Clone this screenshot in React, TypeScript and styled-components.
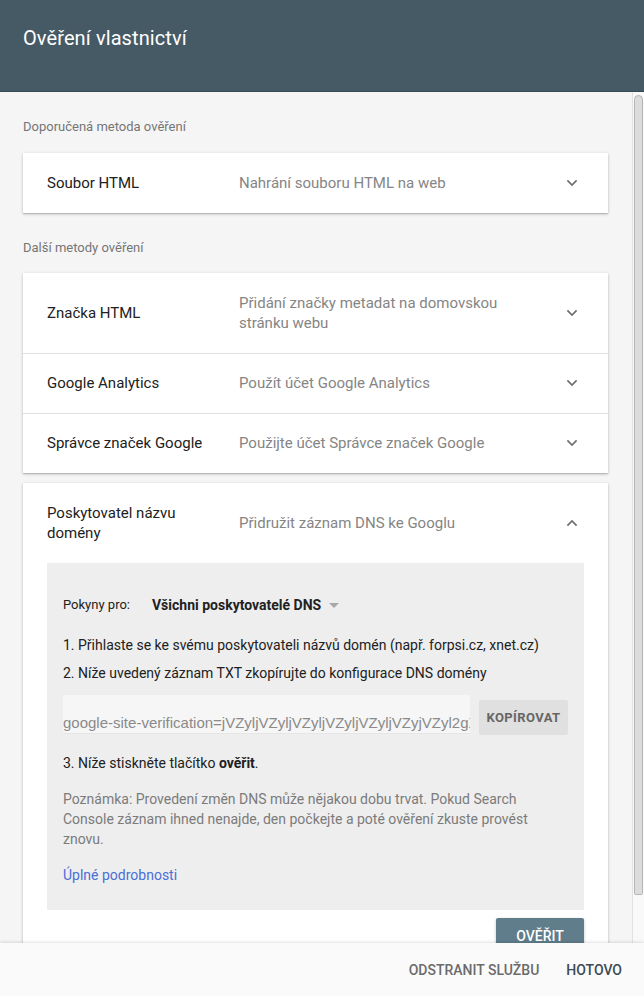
import React from "react";
import styled, { createGlobalStyle } from "styled-components";

const GlobalStyle = createGlobalStyle`
  html, body {
    margin: 0;
    padding: 0;
    height: 100%;
    overflow: hidden;
  }
  body {
    font-family: Roboto, "Liberation Sans", Arial, sans-serif;
    background: #f5f5f5;
  }
`;

const Dialog = styled.div`
  display: flex;
  flex-direction: column;
  width: 644px;
  height: 996px;
  background: #f5f5f5;
`;

const Header = styled.header`
  flex: 0 0 92px;
  background: #465a65;
  border-bottom: 1px solid #3a4a54;
  box-sizing: border-box;
  padding: 26px 23px 0;
`;

const HeaderTitle = styled.h1`
  margin: 0;
  font-size: 20px;
  font-weight: 400;
  letter-spacing: 0.1px;
  line-height: 24px;
  color: #ffffff;
`;

const BodyArea = styled.div`
  flex: 1;
  display: flex;
  min-height: 0;
`;

const Content = styled.div`
  flex: 1;
  overflow: hidden;
  padding: 26px 24px 20px 23px;
`;

const ScrollTrack = styled.div`
  flex: 0 0 12px;
  box-sizing: border-box;
  background: #f9f9f9;
  border-left: 1px solid #e2e2e2;
  padding: 3px 1px 0 1px;
`;

const ScrollThumb = styled.div`
  height: 800px;
  box-sizing: border-box;
  background: #dcdcdc;
  border: 1px solid #b5b5b5;
  border-radius: 5px 5px 2px 2px;
`;

const SectionLabel = styled.div<{ $first?: boolean }>`
  font-size: 13px;
  line-height: 18px;
  color: #757575;
  margin: ${(p) => (p.$first ? "0 0 17px" : "26px 0 16px")};
`;

const Card = styled.div<{ $gap?: boolean }>`
  background: #ffffff;
  box-shadow: 0 1px 3px rgba(0, 0, 0, 0.22), 0 1px 1px rgba(0, 0, 0, 0.12);
  margin-top: ${(p) => (p.$gap ? "10px" : "0")};
`;

const Row = styled.div<{ $divider?: boolean }>`
  display: grid;
  grid-template-columns: 168px 1fr 24px;
  column-gap: 24px;
  align-items: center;
  padding: ${(p) => (p.$divider ? "19px" : "20px")} 24px 20px;
  border-top: ${(p) => (p.$divider ? "1px solid #e0e0e0" : "none")};
`;

const RowTitle = styled.div`
  font-size: 15px;
  line-height: 20px;
  color: #212121;
`;

const RowDesc = styled.div`
  font-size: 15px;
  line-height: 20px;
  color: #858585;
`;

const ChevronWrap = styled.div`
  display: flex;
  align-items: center;
  justify-content: center;
  height: 20px;
  color: #6e6e6e;
`;

const Details = styled.div`
  margin: 0 24px;
  background: #eeeeee;
  padding: 32px 16px 25px;
`;

const ProviderLine = styled.div`
  display: flex;
  align-items: center;
  font-size: 13px;
  line-height: 20px;
  color: #212121;
  margin-bottom: 20px;
`;

const ProviderSelect = styled.span`
  display: inline-flex;
  align-items: center;
  margin-left: 22px;
  font-size: 14px;
  font-weight: 700;
`;

const SelectArrow = styled.span`
  width: 0;
  height: 0;
  margin-left: 8px;
  border-left: 5px solid transparent;
  border-right: 5px solid transparent;
  border-top: 5px solid #a8a8a8;
`;

const Step = styled.div`
  font-size: 14px;
  line-height: 20px;
  color: #212121;
  margin-bottom: 8px;

  b {
    font-weight: 700;
  }
`;

const RecordRow = styled.div`
  display: flex;
  align-items: flex-start;
  gap: 9px;
  margin: 12px 0 18px;
`;

const RecordField = styled.div`
  flex: 0 0 407px;
  height: 39px;
  box-sizing: border-box;
  background: #f6f6f6;
  border-bottom: 1px solid #e6e6e6;
  padding-top: 19px;
  overflow: hidden;
  white-space: nowrap;
  font-family: "Liberation Sans", Arial, sans-serif;
  font-size: 15px;
  line-height: 18px;
  color: #8a8a8a;
`;

const CopyButton = styled.button`
  margin-top: 5px;
  height: 35px;
  width: 89px;
  border: none;
  border-radius: 2px;
  background: #e0e0e0;
  color: #666666;
  font-family: Roboto, sans-serif;
  font-size: 13px;
  font-weight: 700;
  letter-spacing: 0.4px;
  text-transform: uppercase;
  padding: 0;
  cursor: pointer;
`;

const Note = styled.p`
  margin: 16px 0 16px;
  max-width: 480px;
  font-size: 14px;
  line-height: 20px;
  color: #7b7b7b;
`;

const DetailsLink = styled.a`
  font-size: 14px;
  line-height: 20px;
  color: #4a6fd6;
  text-decoration: none;
`;

const ActionRow = styled.div`
  display: flex;
  justify-content: flex-end;
  padding: 8px 24px 24px;
`;

const VerifyButton = styled.button`
  height: 36px;
  width: 88px;
  border: none;
  border-radius: 2px;
  background: #607d8b;
  color: #ffffff;
  font-family: Roboto, sans-serif;
  font-size: 14px;
  font-weight: 500;
  text-transform: uppercase;
  box-shadow: 0 1px 3px rgba(0, 0, 0, 0.25);
  cursor: pointer;
`;

const Footer = styled.footer`
  flex: 0 0 53px;
  display: flex;
  align-items: center;
  justify-content: flex-end;
  gap: 27px;
  padding-right: 22px;
  background: #fafafa;
  box-shadow: 0 -1px 3px rgba(0, 0, 0, 0.12);
  position: relative;
  z-index: 1;
`;

const FooterButton = styled.button<{ $primary?: boolean }>`
  border: none;
  background: none;
  padding: 0;
  font-family: Roboto, sans-serif;
  font-size: 14px;
  font-weight: 500;
  text-transform: uppercase;
  color: ${(p) => (p.$primary ? "#3c4a53" : "#6b6b6b")};
  cursor: pointer;
`;

const Chevron = ({ up }: { up?: boolean }) => (
  <svg width="24" height="24" viewBox="0 0 24 24" fill="none">
    <path
      d={up ? "M7.4 14.6 12 10l4.6 4.6" : "M7.4 9.4 12 14l4.6-4.6"}
      stroke="currentColor"
      strokeWidth="1.7"
    />
  </svg>
);

interface Method {
  title: string;
  desc: string;
}

const otherMethods: Method[] = [
  { title: "Značka HTML", desc: "Přidání značky metadat na domovskou stránku webu" },
  { title: "Google Analytics", desc: "Použít účet Google Analytics" },
  { title: "Správce značek Google", desc: "Použijte účet Správce značek Google" },
];

const MethodRow = ({ method, divider, up }: { method: Method; divider?: boolean; up?: boolean }) => (
  <Row $divider={divider}>
    <RowTitle>{method.title}</RowTitle>
    <RowDesc>{method.desc}</RowDesc>
    <ChevronWrap>
      <Chevron up={up} />
    </ChevronWrap>
  </Row>
);

const App: React.FC = () => {
  return (
    <>
      <GlobalStyle />
      <Dialog>
        <Header>
          <HeaderTitle>Ověření vlastnictví</HeaderTitle>
        </Header>
        <BodyArea>
          <Content>
            <SectionLabel $first>Doporučená metoda ověření</SectionLabel>
            <Card>
              <MethodRow method={{ title: "Soubor HTML", desc: "Nahrání souboru HTML na web" }} />
            </Card>

            <SectionLabel>Další metody ověření</SectionLabel>
            <Card>
              {otherMethods.map((m, i) => (
                <MethodRow key={m.title} method={m} divider={i > 0} />
              ))}
            </Card>

            <Card $gap>
              <MethodRow
                method={{ title: "Poskytovatel názvu domény", desc: "Přidružit záznam DNS ke Googlu" }}
                up
              />
              <Details>
                <ProviderLine>
                  Pokyny pro:
                  <ProviderSelect>
                    Všichni poskytovatelé DNS
                    <SelectArrow />
                  </ProviderSelect>
                </ProviderLine>
                <Step>1. Přihlaste se ke svému poskytovateli názvů domén (např. forpsi.cz, xnet.cz)</Step>
                <Step>2. Níže uvedený záznam TXT zkopírujte do konfigurace DNS domény</Step>
                <RecordRow>
                  <RecordField>google-site-verification=jVZyljVZyljVZyljVZyljVZyljVZyjVZyl2gXyZ</RecordField>
                  <CopyButton>Kopírovat</CopyButton>
                </RecordRow>
                <Step>
                  3. Níže stiskněte tlačítko <b>ověřit</b>.
                </Step>
                <Note>
                  Poznámka: Provedení změn DNS může nějakou dobu trvat. Pokud Search Console záznam ihned
                  nenajde, den počkejte a poté ověření zkuste provést znovu.
                </Note>
                <DetailsLink href="#">Úplné podrobnosti</DetailsLink>
              </Details>
              <ActionRow>
                <VerifyButton>Ověřit</VerifyButton>
              </ActionRow>
            </Card>
          </Content>
          <ScrollTrack>
            <ScrollThumb />
          </ScrollTrack>
        </BodyArea>
        <Footer>
          <FooterButton>Odstranit službu</FooterButton>
          <FooterButton $primary>Hotovo</FooterButton>
        </Footer>
      </Dialog>
    </>
  );
};

export default App;
